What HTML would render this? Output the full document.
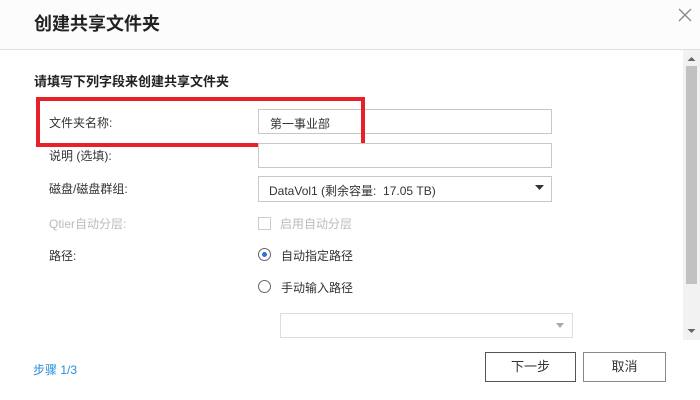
<!DOCTYPE html>
<html><head><meta charset="utf-8"><style>
body{margin:0;width:700px;height:400px;background:#fff;position:relative;overflow:hidden;font-family:"Liberation Sans","Noto Sans CJK SC",sans-serif;color:#333;}
.a{position:absolute}
.lbl{font-size:12px;color:#333;left:49px}
.inp{position:absolute;background:#fff;border:1px solid #c8c8c8;box-sizing:border-box}
</style></head><body>
<div class="a" style="left:0;top:0;width:700px;height:49px;background:#fcfcfc;border-bottom:1px solid #e0e0e0"></div>
<div class="a" style="left:34px;top:10px;font-size:18px;font-weight:bold;color:#222">创建共享文件夹</div>
<svg class="a" style="left:678px;top:8px" width="14" height="14"><path d="M1 1L13 13M13 1L1 13" stroke="#888" stroke-width="1.3"/></svg>
<div class="a" style="left:683px;top:50px;width:17px;height:290px;background:#f2f2f2"></div>
<div class="a" style="left:686px;top:66px;width:11px;height:218px;background:#c1c1c1"></div>
<svg class="a" style="left:686px;top:55px" width="11" height="8"><path d="M1.5 6L5.5 2L9.5 6Z" fill="#666"/></svg>
<svg class="a" style="left:686px;top:327px" width="11" height="8"><path d="M1.5 2L5.5 6L9.5 2Z" fill="#666"/></svg>
<div class="a" style="left:34px;top:71px;font-size:13px;font-weight:bold;color:#222">请填写下列字段来创建共享文件夹</div>
<div class="a lbl" style="top:114px">文件夹名称:</div>
<div class="inp" style="left:258px;top:109px;width:294px;height:25px"></div>
<div class="a" style="left:270px;top:115px;font-size:12px">第一事业部</div>
<div class="a" style="left:36px;top:97px;width:329px;height:50px;border:4px solid #e8202a;box-sizing:border-box"></div>
<div class="a lbl" style="top:147px">说明 (选填):</div>
<div class="inp" style="left:258px;top:143px;width:294px;height:25px"></div>
<div class="a lbl" style="top:180px">磁盘/磁盘群组:</div>
<div class="inp" style="left:258px;top:176px;width:294px;height:26px"></div>
<div class="a" style="left:269px;top:182px;font-size:12px">DataVol1 (剩余容量:&nbsp; 17.05 TB)</div>
<svg class="a" style="left:535px;top:185px" width="10" height="6"><path d="M0 0H9L4.5 5Z" fill="#333"/></svg>
<div class="a lbl" style="top:215px;color:#bbb">Qtier自动分层:</div>
<div class="a" style="left:258px;top:217px;width:13px;height:13px;border:1px solid #ccc;box-sizing:border-box"></div>
<div class="a" style="left:280px;top:215px;font-size:12px;color:#bbb">启用自动分层</div>
<div class="a lbl" style="top:247px">路径:</div>
<div class="a" style="left:258px;top:248px;width:13px;height:13px;border:1px solid #666;border-radius:50%;box-sizing:border-box"></div>
<div class="a" style="left:262px;top:252px;width:5px;height:5px;background:#2f6fd8;border-radius:50%"></div>
<div class="a" style="left:281px;top:247px;font-size:12px">自动指定路径</div>
<div class="a" style="left:258px;top:280px;width:13px;height:13px;border:1px solid #666;border-radius:50%;box-sizing:border-box"></div>
<div class="a" style="left:281px;top:279px;font-size:12px">手动输入路径</div>
<div class="inp" style="left:280px;top:313px;width:293px;height:25px;border-color:#ddd"></div>
<svg class="a" style="left:556px;top:323px" width="9" height="6"><path d="M0 0H8L4 5Z" fill="#aaa"/></svg>
<div class="a" style="left:33px;top:361px;font-size:12px;color:#2a8ed8">步骤 1/3</div>
<div class="a" style="left:485px;top:352px;width:91px;height:30px;border:1px solid #555;box-sizing:border-box;text-align:center;line-height:28px;font-size:13px">下一步</div>
<div class="a" style="left:583px;top:352px;width:83px;height:30px;border:1px solid #888;box-sizing:border-box;text-align:center;line-height:28px;font-size:13px">取消</div>
</body></html>
